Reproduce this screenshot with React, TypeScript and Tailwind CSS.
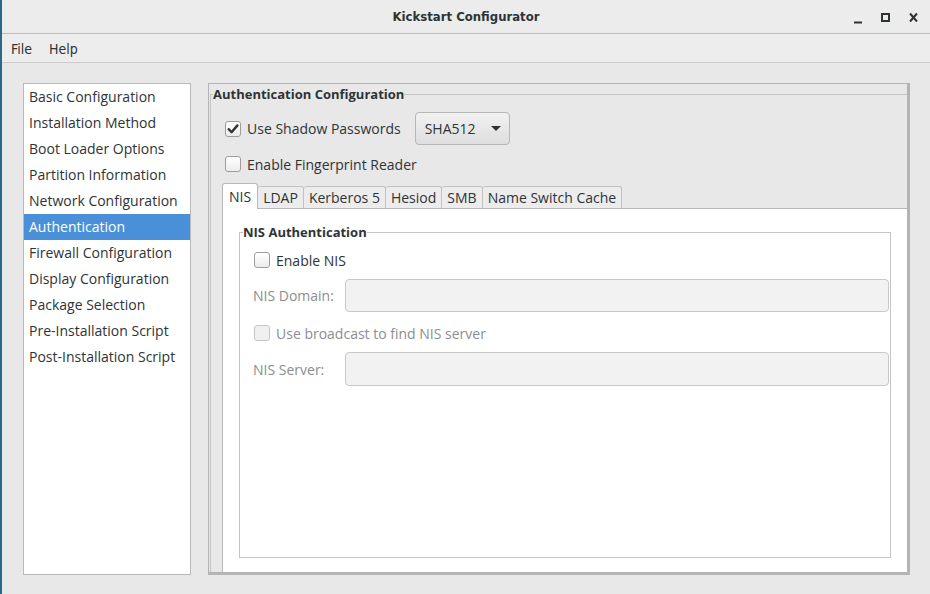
import React from "react"

const navItems = [
    "Basic Configuration",
    "Installation Method",
    "Boot Loader Options",
    "Partition Information",
    "Network Configuration",
    "Authentication",
    "Firewall Configuration",
    "Display Configuration",
    "Package Selection",
    "Pre-Installation Script",
    "Post-Installation Script",
]

const tabs = ["NIS", "LDAP", "Kerberos 5", "Hesiod", "SMB", "Name Switch Cache"]

function CheckBox({ checked = false, disabled = false }: { checked?: boolean; disabled?: boolean }) {
    return (
        <span
            className={`flex h-[16px] w-[16px] shrink-0 items-center justify-center rounded-[3px] border ${
                disabled ? "border-[#c6c6c6] bg-[#f0f0f0]" : "border-[#9d9d9d] bg-gradient-to-b from-white to-[#ececec]"
            }`}
        >
            {checked && (
                <svg width="12" height="12" viewBox="0 0 12 12">
                    <path d="M1.8 6.2 4.6 9.2 10.4 2.4" fill="none" stroke="#2e3436" strokeWidth="2.4" strokeLinecap="round" strokeLinejoin="round" />
                </svg>
            )}
        </span>
    )
}

export default function App() {
    return (
        <div className="flex h-[594px] w-[930px] flex-col overflow-hidden border-l-2 border-[#2b6889] bg-[#e8e8e8] font-['Open_Sans',sans-serif] text-[14px] text-[#2e3436]">
            {/* Title bar */}
            <div className="grid h-[34px] shrink-0 grid-cols-[1fr_auto_1fr] items-center border-b border-[#bcbcbc] bg-[#ececec]">
                <div />
                <div className="font-['DejaVu_Sans_Condensed','DejaVu_Sans',sans-serif] text-[13px] font-bold [font-stretch:condensed]">Kickstart Configurator</div>
                <div className="flex items-center justify-end gap-[19px] pr-[12px]">
                    <svg width="8" height="14" viewBox="0 0 8 14">
                        <path d="M0 12.5h8" stroke="#2e3436" strokeWidth="2" />
                    </svg>
                    <svg width="9" height="14" viewBox="0 0 9 14">
                        <rect x="1" y="4" width="7" height="7" fill="none" stroke="#2e3436" strokeWidth="2" />
                    </svg>
                    <svg width="9" height="14" viewBox="0 0 9 14">
                        <path d="M1 3.5l7 8M8 3.5l-7 8" stroke="#2e3436" strokeWidth="2" />
                    </svg>
                </div>
            </div>

            {/* Menu bar */}
            <div className="flex h-[29px] shrink-0 items-center gap-[17px] border-b border-[#cdcdcd] bg-[#ededed] pl-[9px] pt-[2px] font-['DejaVu_Sans_Condensed','DejaVu_Sans',sans-serif] text-[14px] [font-stretch:condensed]">
                <span>File</span>
                <span>Help</span>
            </div>

            {/* Body */}
            <div className="flex flex-1 gap-[17px] pb-[19px] pl-[21px] pt-[20px]">
                {/* Section list */}
                <div className="w-[168px] shrink-0 border border-[#b9b9b9] bg-white">
                    {navItems.map((item) =>
                        item === "Authentication" ? (
                            <div key={item} className="flex h-[26px] items-center bg-[#4a90d9] pb-[2px] pl-[5px] text-white">
                                {item}
                            </div>
                        ) : (
                            <div key={item} className="flex h-[26px] items-center pb-[2px] pl-[5px]">
                                {item}
                            </div>
                        )
                    )}
                </div>

                {/* Authentication panel */}
                <div className="flex w-[702px] flex-col border-b-[3px] border-l border-r-[3px] border-t border-[#b4b4b4]">
                    <fieldset className="ml-[1px] flex flex-1 flex-col border-l border-t border-[#c4c4c4]">
                        <legend className="ml-[2px] text-[13px] font-bold leading-[20px]">Authentication Configuration</legend>

                        <div className="mt-[8px] flex h-[33px] items-center pl-[14px]">
                            <CheckBox checked />
                            <span className="ml-[6px]">Use Shadow Passwords</span>
                            <button className="ml-[14px] flex h-[33px] w-[95px] items-center rounded-[4px] border border-[#b6b6b6] bg-gradient-to-b from-[#f1f1f1] to-[#dedede] pl-[9px] text-[14px] text-[#2e3436]">
                                SHA512
                                <svg className="ml-[15px]" width="10" height="6" viewBox="0 0 10 6">
                                    <path d="M0 0h10L5 5z" fill="#2e3436" />
                                </svg>
                            </button>
                        </div>

                        <div className="mt-[9px] flex h-[20px] items-center pl-[14px]">
                            <CheckBox />
                            <span className="ml-[6px]">Enable Fingerprint Reader</span>
                        </div>

                        {/* Tabs */}
                        <div className="ml-[11px] mt-[9px] flex h-[25px] items-end">
                            {tabs.map((tab, i) =>
                                i === 0 ? (
                                    <div key={tab} className="relative -mb-px flex h-[26px] items-center rounded-t-[3px] border border-b-0 border-[#b8b8b8] bg-white px-[6px]">
                                        {tab}
                                    </div>
                                ) : (
                                    <div key={tab} className="flex h-[22px] items-center rounded-t-[3px] border border-b-0 border-l-0 border-[#c2c2c2] bg-[#ececec] px-[5px]">
                                        {tab}
                                    </div>
                                )
                            )}
                        </div>

                        {/* NIS page */}
                        <div className="ml-[11px] flex flex-1 flex-col border-l border-t border-[#b8b8b8] bg-white">
                            <fieldset className="mb-[14px] ml-[16px] mr-[16px] mt-[13px] flex flex-1 flex-col border border-[#c4c4c4]">
                                <legend className="ml-[3px] text-[13px] font-bold leading-[20px]">NIS Authentication</legend>

                                <div className="mt-[8px] flex h-[20px] items-center pl-[14px]">
                                    <CheckBox />
                                    <span className="ml-[6px]">Enable NIS</span>
                                </div>

                                <div className="mt-[9px] flex h-[33px] items-center pl-[13px]">
                                    <span className="w-[92px] text-[#8b8e8f]">NIS Domain:</span>
                                    <div className="mr-[1px] h-[33px] flex-1 rounded-[4px] border border-[#c8c8c8] bg-[#f2f2f2]" />
                                </div>

                                <div className="mt-[11px] flex h-[20px] items-center pl-[14px]">
                                    <CheckBox disabled />
                                    <span className="ml-[6px] text-[#8b8e8f]">Use broadcast to find NIS server</span>
                                </div>

                                <div className="mt-[9px] flex h-[34px] items-center pl-[13px]">
                                    <span className="w-[92px] text-[#8b8e8f]">NIS Server:</span>
                                    <div className="mr-[1px] h-[34px] flex-1 rounded-[4px] border border-[#c8c8c8] bg-[#f2f2f2]" />
                                </div>
                            </fieldset>
                        </div>
                    </fieldset>
                </div>
            </div>
        </div>
    )
}
